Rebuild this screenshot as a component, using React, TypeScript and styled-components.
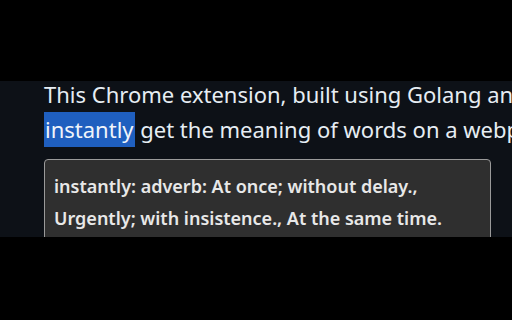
import styled, { createGlobalStyle } from 'styled-components';

const GlobalStyle = createGlobalStyle`
  html, body {
    margin: 0;
    padding: 0;
    background: #000;
  }
  body {
    width: 512px;
    height: 320px;
    overflow: hidden;
    font-family: "Noto Sans", "Open Sans", sans-serif;
  }
`;

export default function App() {
  return (
    <>
      <GlobalStyle />
      <Frame>
        <Band />
        <Readme>
          <Paragraph>
            This Chrome extension, built using Golang and WebAssembly, lets you
            <br />
            <Selected>instantly</Selected> get the meaning of words on a webpage.
          </Paragraph>
          <Tooltip>
            instantly: adverb: At once; without delay.,
            <br />
            Urgently; with insistence., At the same time.
          </Tooltip>
        </Readme>
      </Frame>
    </>
  );
}

const Frame = styled.div`
  width: 512px;
  height: 320px;
  display: flex;
  flex-direction: column;
  background: #000;
`;

const Band = styled.div`
  height: 81px;
  flex-shrink: 0;
`;

const Readme = styled.div`
  height: 156px;
  flex-shrink: 0;
  overflow: hidden;
  background: #0d1117;
  padding: 0 0 0 44px;
  box-sizing: border-box;
`;

const Paragraph = styled.p`
  margin: -4px 0 0;
  white-space: nowrap;
  font-size: 22px;
  line-height: 35px;
  color: #e6edf3;
`;

const Selected = styled.span`
  display: inline-block;
  background: #1f5fbf;
  color: #f0f4fa;
  padding: 0 1px;
`;

const Tooltip = styled.div`
  margin-top: 12px;
  width: 447px;
  box-sizing: border-box;
  border: 1.5px solid #9a9a9a;
  border-radius: 4px;
  background: #2f2f2f;
  padding: 10px 9px 14px;
  color: #e8e8e8;
  font-size: 18px;
  font-weight: 600;
  line-height: 32px;
  white-space: nowrap;
`;
